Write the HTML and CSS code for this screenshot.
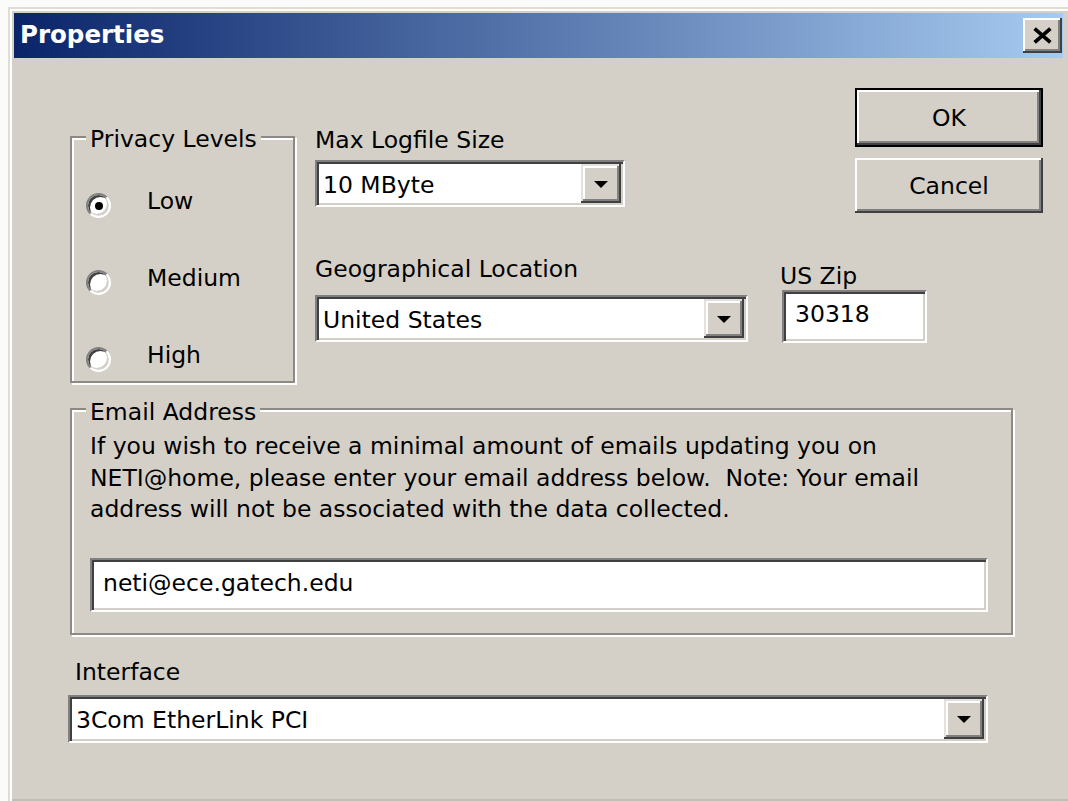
FILE: index.html
```html
<!DOCTYPE html>
<html lang="en">
<head>
<meta charset="utf-8">
<title>Properties</title>
<link rel="stylesheet" href="styles.css">
</head>
<body>
<div class="window">
  <div class="titlebar">
    <span class="title">Properties</span>
    <button class="close" type="button" aria-label="Close">
      <svg viewBox="0 0 20 16" width="21" height="17"><path d="M2.5 1.5 L17.5 14.5 M17.5 1.5 L2.5 14.5" stroke="#000" stroke-width="3.6" fill="none"/></svg>
    </button>
  </div>

  <div class="client">
    <div class="top">
      <div class="group privacy">
        <div class="group-title">Privacy Levels</div>
        <div class="radios">
          <div class="radio"><span class="dot checked"></span><span>Low</span></div>
          <div class="radio"><span class="dot"></span><span>Medium</span></div>
          <div class="radio"><span class="dot"></span><span>High</span></div>
        </div>
      </div>

      <div class="field max">
        <div class="label">Max Logfile Size</div>
        <div class="combo">
          <span class="value">10 MByte</span>
          <span class="drop"><span class="arrow"></span></span>
        </div>
      </div>

      <div class="buttons">
        <button class="btn default" type="button">OK</button>
        <button class="btn cancel" type="button">Cancel</button>
      </div>

      <div class="field geo">
        <div class="label">Geographical Location</div>
        <div class="combo">
          <span class="value">United States</span>
          <span class="drop"><span class="arrow"></span></span>
        </div>
      </div>

      <div class="field zip">
        <div class="label">US Zip</div>
        <div class="edit">30318</div>
      </div>
    </div>

    <div class="group email">
      <div class="group-title">Email Address</div>
      <p class="note">If you wish to receive a minimal amount of emails updating you on<br>NETI@home, please enter your email address below.&nbsp; Note: Your email<br>address will not be associated with the data collected.</p>
      <div class="edit">neti@ece.gatech.edu</div>
    </div>

    <div class="field iface">
      <div class="label">Interface</div>
      <div class="combo">
        <span class="value">3Com EtherLink PCI</span>
        <span class="drop"><span class="arrow"></span></span>
      </div>
    </div>
  </div>
</div>
</body>
</html>
```

FILE: styles.css
```css
* {
  box-sizing: border-box;
}

html,
body {
  margin: 0;
}

body {
  background: #fbfbf9;
  font-family: "DejaVu Sans", "Noto Sans", sans-serif;
  font-size: 23.5px;
  color: #000;
}

/* dialog frame */
.window {
  margin: 7px 0 0 8px;
  width: 1060px;
  height: 794px;
  background: #d4d0c8;
  border-left: 2px solid #e0ddd7;
  border-top: 2px solid #e0ddd7;
  box-shadow: inset 2px 2px 0 #fff, inset 0 -2px 0 #c2beb6;
  padding: 4px 5px 0 4px;
}

.titlebar {
  height: 45px;
  display: flex;
  align-items: center;
  justify-content: space-between;
  background: linear-gradient(to right, #0a246a, #a6caf0);
}

.title {
  padding-left: 6px;
  color: #fff;
  font-weight: bold;
  font-size: 24.5px;
  line-height: 1;
}

.close {
  width: 39px;
  height: 35px;
  margin-right: 1px;
  padding: 0;
  border: none;
  background: #d4d0c8;
  display: flex;
  align-items: center;
  justify-content: center;
  box-shadow: inset -2px -2px 0 #404040, inset 2px 2px 0 #fff, inset -4px -4px 0 #808080;
}

.client {
  padding-left: 56px;
}

/* upper block: privacy group, fields and command buttons */
.top {
  margin-top: 30px;
  display: grid;
  grid-template-columns: 225px 20px 433px 32px 75px 73px 115px;
  grid-template-rows: 125px 170px;
}

.privacy {
  grid-column: 1;
  grid-row: 1 / span 2;
  margin-top: 48px;
  height: 247px;
  padding: 0 14px;
}

.max {
  grid-column: 3;
  grid-row: 1;
  margin-top: 38px;
}

.buttons {
  grid-column: 6 / 8;
  grid-row: 1;
  display: flex;
  flex-direction: column;
  gap: 11px;
}

.geo {
  grid-column: 3;
  grid-row: 2;
  margin-top: 42px;
}

.zip {
  grid-column: 5 / 7;
  grid-row: 2;
  margin-top: 49px;
}

/* etched group boxes */
.group {
  border: 2px solid #8d8a85;
  box-shadow: inset 2px 2px 0 #fff, 2px 2px 0 #fff;
}

.group-title {
  width: fit-content;
  margin-top: -10px;
  padding: 0 4px;
  line-height: 22px;
  background: #d4d0c8;
  white-space: nowrap;
}

.radios {
  margin-top: 37px;
  display: flex;
  flex-direction: column;
  gap: 46px;
}

.radio {
  display: flex;
  align-items: flex-start;
  gap: 36px;
  line-height: 28px;
}

.dot {
  width: 25px;
  height: 25px;
  margin-top: 6px;
  flex: none;
  border-radius: 50%;
  border: 2px solid;
  border-color: #808080 #fff #fff #808080;
  background: #fff;
  box-shadow: inset 2px 2px 0 #404040, inset -2px -2px 0 #d4d0c8;
  display: grid;
  place-items: center;
}

.dot.checked::after {
  content: "";
  width: 8px;
  height: 8px;
  border-radius: 50%;
  background: #000;
}

/* labels, combo boxes and edit boxes */
.label {
  line-height: 28px;
  white-space: nowrap;
}

.combo,
.edit {
  background: #fff;
  border: 2px solid;
  border-color: #808080 #fff #fff #808080;
  box-shadow: inset 2px 2px 0 #404040, inset -2px -2px 0 #d4d0c8;
  white-space: nowrap;
}

.combo {
  display: flex;
  padding: 2px;
}

.value {
  flex: 1;
  display: flex;
  align-items: center;
  padding: 3px 0 0 4px;
}

.drop {
  width: 40px;
  flex: none;
  background: #d4d0c8;
  display: flex;
  align-items: center;
  justify-content: center;
  box-shadow: inset -2px -2px 0 #404040, inset 2px 2px 0 #e4e1dc, inset -4px -4px 0 #808080, inset 4px 4px 0 #fff;
}

.arrow {
  width: 0;
  height: 0;
  margin-top: 2px;
  border-left: 7px solid transparent;
  border-right: 7px solid transparent;
  border-top: 7px solid #000;
}

.max .combo {
  margin-top: 6px;
  width: 310px;
  height: 47px;
}

.geo .combo {
  margin-top: 12px;
  width: 433px;
  height: 47px;
}

.edit {
  line-height: 28px;
  padding: 8px 11px;
}

.zip .edit {
  margin-left: 2px;
  width: 145px;
  height: 53px;
}

/* command buttons */
.btn {
  width: 188px;
  padding: 0;
  border: none;
  background: #d4d0c8;
  color: #000;
  font: inherit;
  line-height: 28px;
  box-shadow: inset -2px -2px 0 #404040, inset 2px 2px 0 #fff, inset -4px -4px 0 #808080;
}

.btn.default {
  height: 59px;
  border: 2px solid #000;
}

.btn.cancel {
  height: 55px;
}

/* email group */
.email {
  margin-top: 25px;
  width: 943px;
  padding: 0 23px 21px 18px;
}

.email .group-title {
  margin-left: -4px;
  margin-top: -9px;
}

.note {
  margin: 8px 0 0;
  line-height: 31.5px;
  white-space: nowrap;
}

.email .edit {
  margin-top: 32px;
  height: 54px;
  padding-top: 9px;
}

/* interface selector */
.iface {
  margin-top: 23px;
}

.iface .label {
  margin-left: 5px;
}

.iface .combo {
  margin: 9px 0 0 -2px;
  width: 920px;
  height: 48px;
}
```
